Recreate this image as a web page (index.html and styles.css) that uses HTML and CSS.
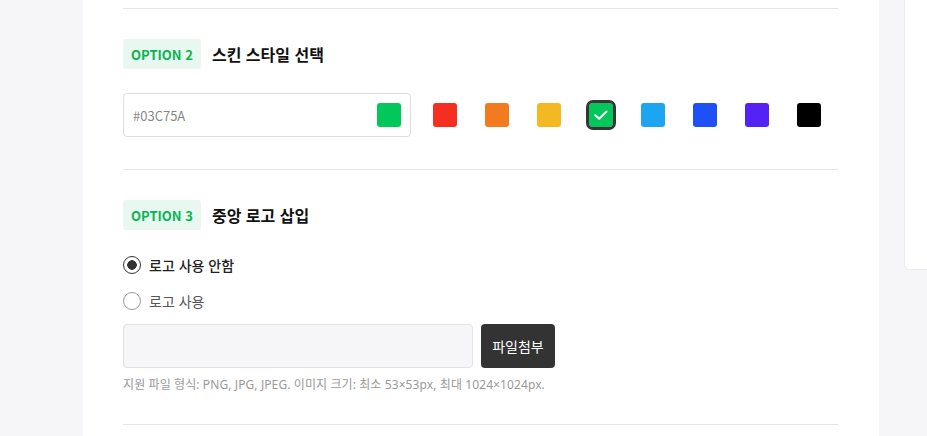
FILE: index.html
```html
<!DOCTYPE html>
<html lang="ko">

<head>
    <meta charset="UTF-8">
    <meta name="viewport" content="width=device-width, initial-scale=1.0">
    <title>QR 코드 스타일</title>
    <link rel="stylesheet" href="styles.css">
</head>

<body>
    <div class="side-space"></div>

    <main class="editor">
        <section class="option">
            <div class="option-head">
                <span class="badge">OPTION 2</span>
                <h2>스킨 스타일 선택</h2>
            </div>
            <div class="skin-row">
                <div class="color-input">
                    <span class="color-code">#03C75A</span>
                    <span class="chip" style="background: #03c75a"></span>
                </div>
                <div class="swatches">
                    <span class="chip" style="background: #f52e22"></span>
                    <span class="chip" style="background: #f27b20"></span>
                    <span class="chip" style="background: #f3b822"></span>
                    <span class="chip selected" style="background: #03c75a">
                        <svg width="16" height="16" viewBox="0 0 16 16"><path d="M2.3 8.2 L6.2 11.8 L13.5 4.5" fill="none" stroke="#fff" stroke-width="2" stroke-linecap="round" stroke-linejoin="round"/></svg>
                    </span>
                    <span class="chip" style="background: #1da5f2"></span>
                    <span class="chip" style="background: #1e50f5"></span>
                    <span class="chip" style="background: #5522f5"></span>
                    <span class="chip" style="background: #000"></span>
                </div>
            </div>
        </section>

        <section class="option">
            <div class="option-head">
                <span class="badge">OPTION 3</span>
                <h2>중앙 로고 삽입</h2>
            </div>
            <div class="radios">
                <label class="radio checked"><span class="dot"></span>로고 사용 안함</label>
                <label class="radio"><span class="dot"></span>로고 사용</label>
            </div>
            <div class="file-row">
                <div class="file-box"></div>
                <button class="file-btn">파일첨부</button>
            </div>
            <p class="help">지원 파일 형식: PNG, JPG, JPEG. 이미지 크기: 최소 53×53px, 최대 1024×1024px.</p>
        </section>
    </main>

    <aside class="sidebar"></aside>
</body>

</html>
```

FILE: styles.css
```css
body {
    display: flex;
    align-items: flex-start;
    margin: 0;
    height: 436px;
    overflow: hidden;
    background: #f6f6f8;
    font-family: "Noto Sans CJK KR", "Noto Sans", sans-serif;
    color: #222;
}

.side-space {
    width: 83px;
    flex-shrink: 0;
}

.editor {
    width: 715px;
    flex-shrink: 0;
    height: 436px;
    padding: 8px 41px 0 40px;
    background: #fff;
}

.option {
    border-top: 1px solid #e6e6e8;
    padding: 30px 0 32px;
}

.option:last-child {
    padding-bottom: 30px;
    border-bottom: 1px solid #e6e6e8;
}

.option-head {
    display: flex;
    align-items: center;
    gap: 11px;
    height: 30px;
}

.badge {
    display: flex;
    align-items: center;
    height: 30px;
    padding: 0 8px;
    border-radius: 3px;
    background: #e8f7ef;
    color: #08b553;
    font-size: 13px;
    font-weight: 700;
}

h2 {
    margin: 0;
    font-size: 16px;
    font-weight: 700;
    color: #111;
}

.skin-row {
    display: flex;
    align-items: center;
    gap: 22px;
    margin-top: 24px;
}

.color-input {
    display: flex;
    align-items: center;
    justify-content: space-between;
    width: 268px;
    height: 42px;
    padding: 0 9px 0 9px;
    border: 1px solid #dedede;
    border-radius: 4px;
}

.color-code {
    font-size: 13px;
    color: #888;
}

.swatches {
    display: flex;
    gap: 28px;
}

.chip {
    display: flex;
    align-items: center;
    justify-content: center;
    width: 24px;
    height: 24px;
    border-radius: 3px;
}

.chip.selected {
    outline: 3px solid #363636;
    border-radius: 4px;
}

.radios {
    display: flex;
    flex-direction: column;
    gap: 16px;
    margin-top: 25px;
}

.radio {
    display: flex;
    align-items: center;
    gap: 8px;
    height: 20px;
    font-size: 14px;
    color: #555;
}

.radio .dot {
    box-sizing: border-box;
    width: 18px;
    height: 18px;
    border: 1px solid #9a9a9a;
    border-radius: 50%;
}

.radio.checked {
    color: #222;
    font-weight: 500;
}

.radio.checked .dot {
    border: 1.5px solid #333;
    background: radial-gradient(circle, #333 0 4.5px, transparent 5px);
}

.file-row {
    display: flex;
    gap: 8px;
    margin-top: 13px;
}

.file-box {
    width: 348px;
    height: 42px;
    border: 1px solid #e2e2e4;
    border-radius: 4px;
    background: #f6f6f8;
}

.file-btn {
    width: 74px;
    height: 44px;
    border: 0;
    border-radius: 4px;
    background: #333;
    color: #fff;
    font-family: inherit;
    font-size: 14px;
}

.help {
    margin: 8px 0 0;
    font-family: "Noto Sans", "Noto Sans CJK KR", sans-serif;
    font-size: 12px;
    line-height: 18px;
    letter-spacing: 0.1px;
    color: #999;
}

.sidebar {
    box-sizing: border-box;
    width: 40px;
    height: 270px;
    margin-left: 25px;
    flex-shrink: 0;
    background: #fff;
    border: 1px solid #ececf0;
    border-top: 0;
    border-right: 0;
    border-radius: 0 0 0 5px;
}
```
